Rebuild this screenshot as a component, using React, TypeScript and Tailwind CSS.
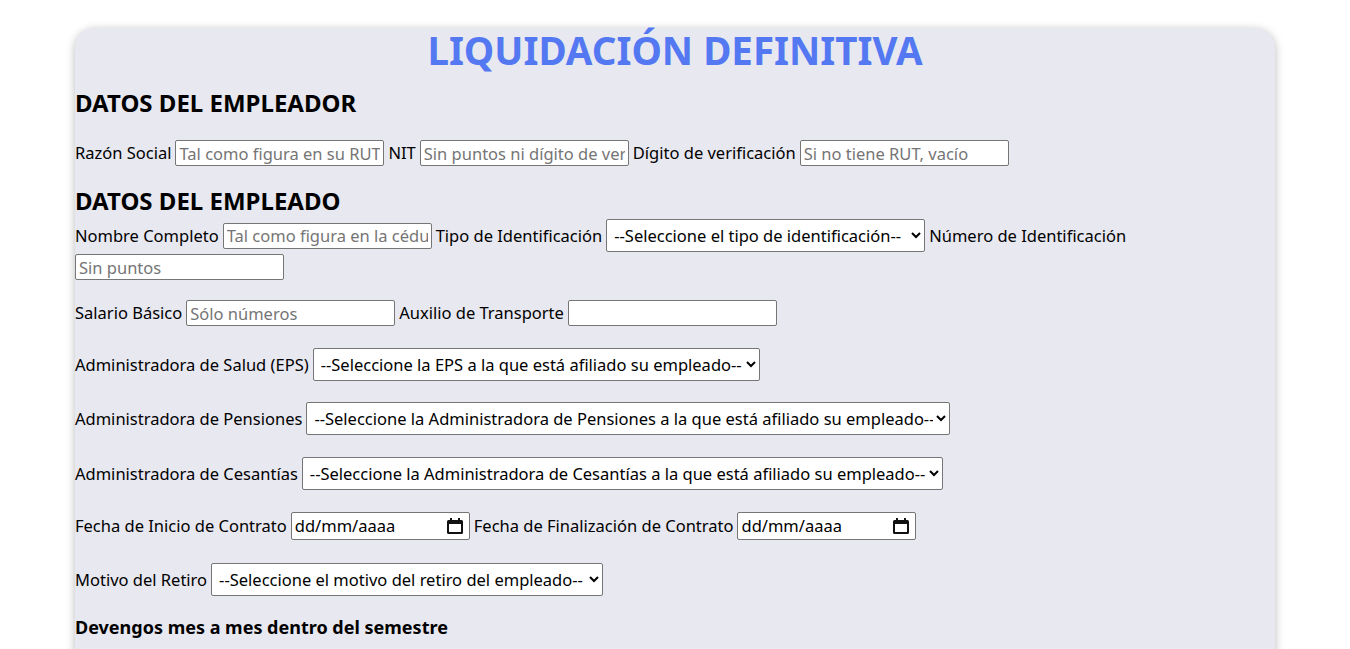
import React from "react";

const inputCls =
  "h-[26px] w-[209px] border border-[#767676] bg-white px-[3px] text-[16.5px] text-black placeholder:text-[#757575] rounded-[2px] outline-none";
const selectCls =
  "h-[33px] border border-[#767676] bg-white pl-[3px] text-[16.5px] text-black rounded-[2px] outline-none";

function Label({ children }: { children: React.ReactNode }) {
  return <span className="whitespace-nowrap">{children}</span>;
}

function TextInput({ ph }: { ph?: string }) {
  return <input type="text" className={inputCls} placeholder={ph} />;
}

function Select({ w, text }: { w: string; text: string }) {
  return (
    <select className={`${selectCls} ${w}`} defaultValue="">
      <option value="">{text}</option>
    </select>
  );
}

function DateBox() {
  return (
    <div className="flex h-[28px] w-[179px] items-center justify-between rounded-[2px] border border-[#767676] bg-white pl-[3px] pr-[5px] text-[16.5px] text-black">
      <span>dd/mm/aaaa</span>
      <svg width="18" height="18" viewBox="0 0 18 18" aria-hidden="true">
        <path
          fillRule="evenodd"
          d="M4 1h2v2h6V1h2v2h1.5A1.5 1.5 0 0 1 17 4.5v11a1.5 1.5 0 0 1-1.5 1.5h-13A1.5 1.5 0 0 1 1 15.5v-11A1.5 1.5 0 0 1 2.5 3H4V1zM3 7v8h12V7H3z"
          fill="#111"
        />
      </svg>
    </div>
  );
}

function Row({ children, className = "" }: { children: React.ReactNode; className?: string }) {
  return (
    <div className={`flex flex-wrap items-center gap-x-[4px] gap-y-[2px] leading-[22px] ${className}`}>
      {children}
    </div>
  );
}

export default function App() {
  return (
    <div className="min-h-[649px] w-full bg-white font-['Noto_Sans',sans-serif] text-[16.5px] text-black">
      <div className="mx-auto mt-[28px] w-[1200px] rounded-[20px] bg-[#e8e8f0] pb-[60px] shadow-[0_2px_10px_rgba(0,0,0,0.28)]">
        <h1 className="text-center text-[38.5px] font-bold leading-[45px] text-[#5378f1]">
          LIQUIDACIÓN DEFINITIVA
        </h1>

        <h2 className="mt-[16px] text-[24px] font-bold leading-[28px]">DATOS DEL EMPLEADOR</h2>

        <Row className="mt-[23px]">
          <Label>Razón Social</Label>
          <TextInput ph="Tal como figura en su RUT" />
          <Label>NIT</Label>
          <TextInput ph="Sin puntos ni dígito de verificación" />
          <Label>Dígito de verificación</Label>
          <TextInput ph="Si no tiene RUT, vacío" />
        </Row>

        <h2 className="mt-[21px] text-[24px] font-bold leading-[28px]">DATOS DEL EMPLEADO</h2>

        <Row className="mt-[4px]">
          <Label>Nombre Completo</Label>
          <TextInput ph="Tal como figura en la cédula" />
          <Label>Tipo de Identificación</Label>
          <Select w="w-[319px]" text="--Seleccione el tipo de identificación--" />
          <Label>Número de Identificación</Label>
          <TextInput ph="Sin puntos" />
        </Row>

        <Row className="mt-[20px]">
          <Label>Salario Básico</Label>
          <TextInput ph="Sólo números" />
          <Label>Auxilio de Transporte</Label>
          <TextInput />
        </Row>

        <Row className="mt-[22px]">
          <Label>Administradora de Salud (EPS)</Label>
          <Select w="w-[447px]" text="--Seleccione la EPS a la que está afiliado su empleado--" />
        </Row>

        <Row className="mt-[21px]">
          <Label>Administradora de Pensiones</Label>
          <Select
            w="w-[644px]"
            text="--Seleccione la Administradora de Pensiones a la que está afiliado su empleado--"
          />
        </Row>

        <Row className="mt-[22px]">
          <Label>Administradora de Cesantías</Label>
          <Select
            w="w-[641px]"
            text="--Seleccione la Administradora de Cesantías a la que está afiliado su empleado--"
          />
        </Row>

        <Row className="mt-[22px]">
          <Label>Fecha de Inicio de Contrato</Label>
          <DateBox />
          <Label>Fecha de Finalización de Contrato</Label>
          <DateBox />
        </Row>

        <Row className="mt-[23px]">
          <Label>Motivo del Retiro</Label>
          <Select w="w-[392px]" text="--Seleccione el motivo del retiro del empleado--" />
        </Row>

        <h3 className="mt-[19px] text-[18px] font-bold leading-[24px]">
          Devengos mes a mes dentro del semestre
        </h3>
      </div>
    </div>
  );
}
